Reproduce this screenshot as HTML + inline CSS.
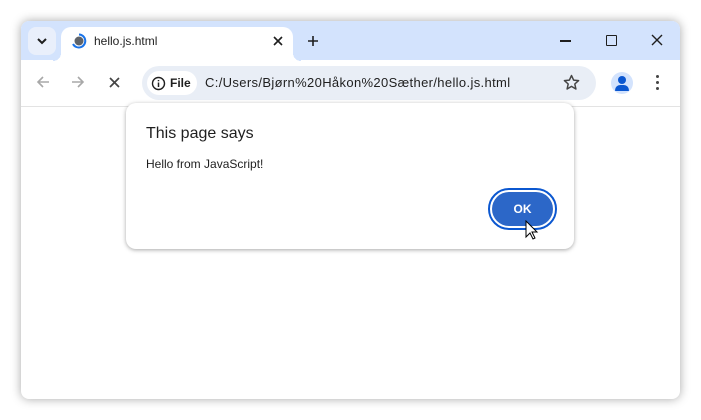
<!DOCTYPE html><html><head><style>
body{margin:0;width:701px;height:420px;background:#fff;position:relative;overflow:hidden;font-family:"Liberation Sans",sans-serif}
.win{position:absolute;left:21px;top:21px;width:659px;height:378px;border-radius:8px;background:#fff;box-shadow:0 0 10px rgba(0,0,0,.35);overflow:hidden}
.tb{position:absolute;left:0;top:0;width:100%;height:39px;background:#d3e3fd}
.abs{position:absolute}
</style></head><body>
<div class="win">
<div class="tb"></div>
<div class="abs" style="left:7px;top:6px;width:28px;height:28px;border-radius:8px;background:#e9effb"></div>
<svg class="abs" style="left:14px;top:14px" width="14" height="12"><path d="M3 4l4 4 4-4" stroke="#1f1f1f" stroke-width="2" fill="none"/></svg>
<div class="abs" style="left:40px;top:6px;width:232px;height:34px;background:#fff;border-radius:10px 10px 0 0"></div>
<div class="abs" style="left:32px;top:32px;width:8px;height:8px;background:radial-gradient(circle at 0 0,#d3e3fd 8px,#fff 8px)"></div>
<div class="abs" style="left:272px;top:32px;width:8px;height:8px;background:radial-gradient(circle at 8px 0,#d3e3fd 8px,#fff 8px)"></div>
<svg class="abs" style="left:50px;top:12px" width="16" height="16"><circle cx="8" cy="8" r="4.5" fill="#5f6368"/><path d="M8 1.5A6.5 6.5 0 1 1 2 11" stroke="#1a73e8" stroke-width="2" fill="none"/></svg>
<div class="abs" style="left:73px;top:13px;font-size:12px;color:#1f1f1f">hello.js.html</div>
<svg class="abs" style="left:252px;top:15px" width="10" height="10"><path d="M1 1l8 8M9 1L1 9" stroke="#1f1f1f" stroke-width="1.6"/></svg>
<svg class="abs" style="left:286px;top:14px" width="12" height="12"><path d="M6 1v10M1 6h10" stroke="#1f1f1f" stroke-width="1.6"/></svg>
<div class="abs" style="left:539px;top:19px;width:11px;height:1.5px;background:#1f1f1f"></div>
<div class="abs" style="left:585px;top:14px;width:9px;height:9px;border:1.5px solid #1f1f1f;border-radius:1px"></div>
<svg class="abs" style="left:630px;top:13px" width="12" height="12"><path d="M1 1l10 10M11 1L1 11" stroke="#1f1f1f" stroke-width="1.4"/></svg>
<div class="abs" style="left:0;top:85px;width:100%;height:1px;background:#e3e3e3"></div>
<svg class="abs" style="left:14px;top:53px" width="16" height="16"><path d="M14 8H3M8 3L3 8l5 5" stroke="#a8a8a8" stroke-width="1.6" fill="none"/></svg>
<svg class="abs" style="left:49px;top:53px" width="16" height="16"><path d="M2 8h11M8 3l5 5-5 5" stroke="#a8a8a8" stroke-width="1.6" fill="none"/></svg>
<svg class="abs" style="left:88px;top:56px" width="11" height="11"><path d="M1 1l9 9M10 1L1 10" stroke="#444" stroke-width="1.7"/></svg>
<div class="abs" style="left:121px;top:45px;width:454px;height:34px;border-radius:17px;background:#e9eef6"></div>
<div class="abs" style="left:126px;top:50px;width:50px;height:24px;border-radius:12px;background:#fff"></div>
<svg class="abs" style="left:130px;top:55px" width="15" height="15"><circle cx="7.5" cy="7.5" r="6" stroke="#1f1f1f" stroke-width="1.4" fill="none"/><path d="M7.5 6.5v4.5M7.5 4v1.3" stroke="#1f1f1f" stroke-width="1.5"/></svg>
<div class="abs" style="left:149px;top:55px;font-size:12px;font-weight:bold;color:#1f1f1f">File</div>
<div class="abs" style="left:184px;top:54px;font-size:13px;letter-spacing:0.35px;color:#1f1f1f">C:/Users/Bjørn%20Håkon%20Sæther/hello.js.html</div>
<svg class="abs" style="left:542px;top:53px" width="17" height="17"><path d="M8.5 1.5l2.1 4.6 5 .5-3.8 3.4 1.1 5-4.4-2.6-4.4 2.6 1.1-5L1.4 6.6l5-.5z" stroke="#444" stroke-width="1.5" fill="none" stroke-linejoin="round"/></svg>
<div class="abs" style="left:590px;top:51px;width:22px;height:22px;border-radius:50%;background:#d3e3fd;overflow:hidden"><div class="abs" style="left:7px;top:4px;width:8px;height:8px;border-radius:50%;background:#0b57d0"></div><div class="abs" style="left:4px;top:13px;width:14px;height:6px;border-radius:7px 7px 1px 1px;background:#0b57d0"></div></div>
<div class="abs" style="left:635px;top:54px;width:3px;height:3px;border-radius:50%;background:#444;box-shadow:0 6px #444,0 12px #444"></div>
<div class="abs" style="left:105px;top:82px;width:448px;height:146px;border-radius:10px;background:#fff;box-shadow:0 1px 4px rgba(0,0,0,.35)"></div>
<div class="abs" style="left:125px;top:104px;font-size:16px;color:#1f1f1f">This page says</div>
<div class="abs" style="left:125px;top:136px;font-size:12px;color:#1f1f1f">Hello from JavaScript!</div>
<div class="abs" style="left:467px;top:167px;width:69px;height:42px;border-radius:21px;border:2px solid #0b57d0;box-sizing:border-box;padding:2px"><div style="width:100%;height:100%;border-radius:18px;background:#2c67c8;color:#fff;font-size:12px;font-weight:bold;text-align:center;line-height:34px">OK</div></div>
<svg class="abs" style="left:504px;top:199px" width="14" height="22"><path d="M1 1v16l4-4 3 6 2-1-3-6h5z" fill="#fff" stroke="#000" stroke-width="1"/></svg>
</div>
</body></html>
